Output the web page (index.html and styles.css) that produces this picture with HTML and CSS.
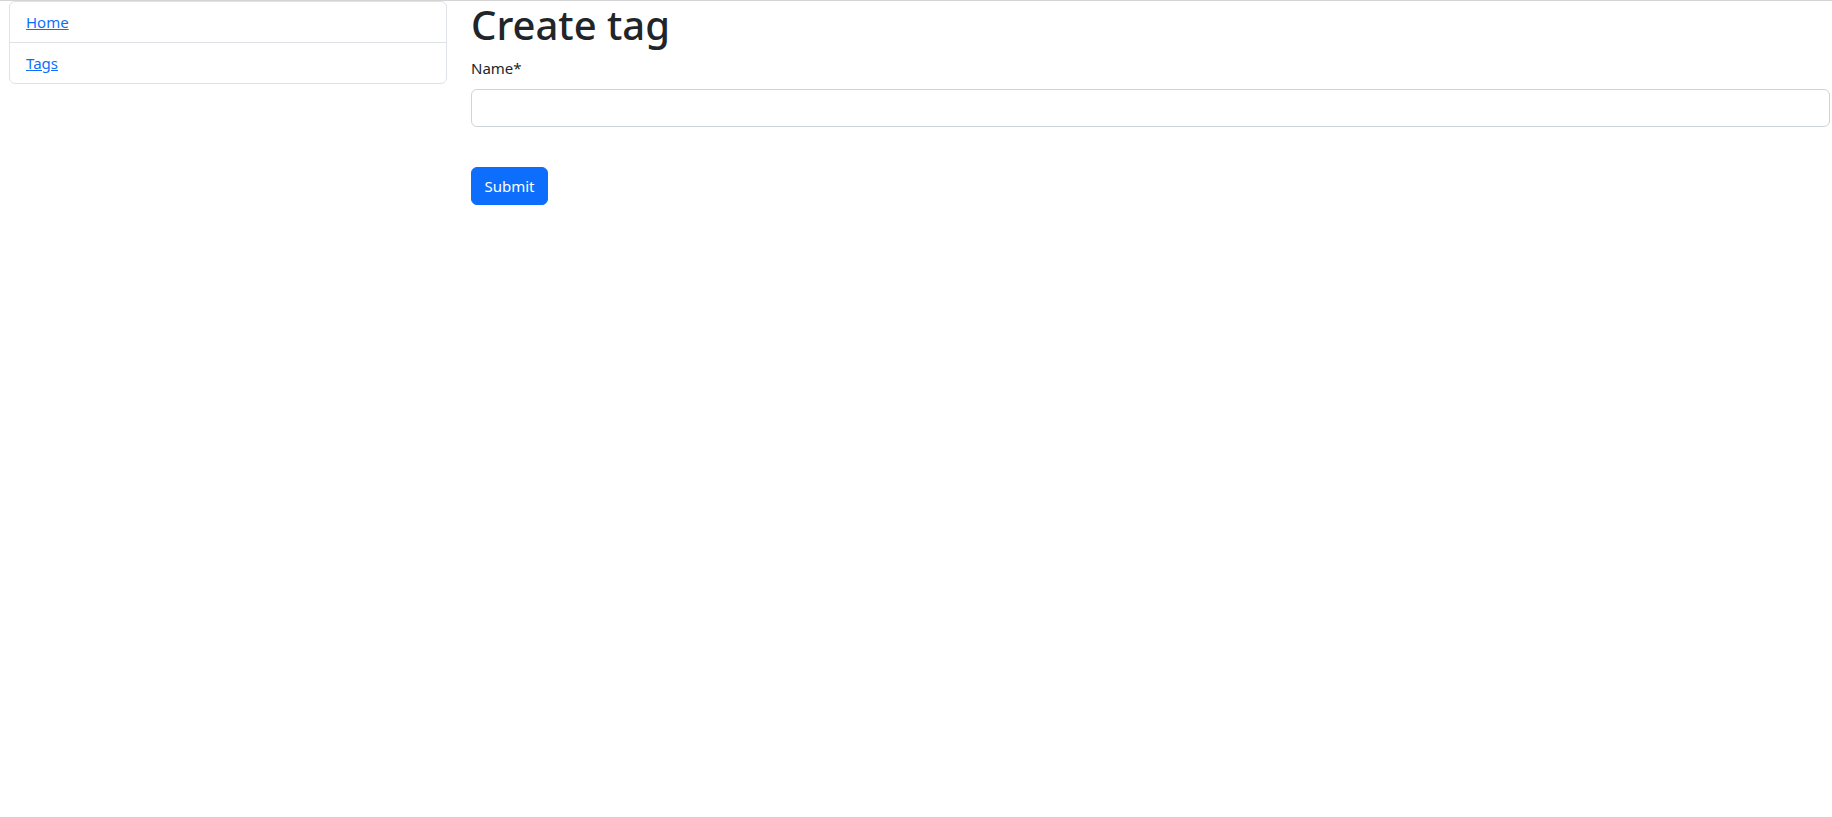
FILE: index.html
```html
<!DOCTYPE html>
<html lang="en">
<head>
<meta charset="utf-8">
<title>Create tag</title>
<link rel="stylesheet" href="styles.css">
</head>
<body>
<div class="topline"></div>
<div class="layout">
  <nav class="sidebar">
    <ul class="list-group">
      <li class="list-item"><a href="#">Home</a></li>
      <li class="list-item"><a href="#">Tags</a></li>
    </ul>
  </nav>
  <main class="main">
    <h1 class="title">Create tag</h1>
    <form class="form">
      <div class="field">
        <label class="label" for="name">Name*</label>
        <input class="input" id="name" type="text">
      </div>
      <button class="btn" type="button">Submit</button>
    </form>
  </main>
</div>
</body>
</html>
```
FILE: styles.css
```css
* { box-sizing: border-box; }
html, body { margin: 0; padding: 0; background: #fff; }
body {
  font-family: "Noto Sans", "Open Sans", sans-serif;
  font-size: 16px;
  line-height: 24px;
  color: #212529;
}
.topline { height: 1px; background: #d4d4d4; }
.layout {
  display: flex;
  gap: 24px;
  padding: 0 2px 0 9px;
}
.sidebar { width: 438px; flex: none; }
.list-group {
  list-style: none;
  margin: 0;
  padding: 0;
  border: 1px solid #dee2e6;
  border-radius: 6px;
}
.list-item {
  padding: 8px 16px;
  border-top: 1px solid #dee2e6;
}
.list-item:first-child { border-top: none; }
.list-item a { color: #0d6efd; text-decoration: underline; font-size: 15px; }
.main { flex: 1; min-width: 0; }
.title {
  margin: 0 0 8px;
  font-size: 40px;
  line-height: 48px;
  font-weight: 500;
  color: #212529;
}
.field { margin-bottom: 40px; }
.label { display: block; margin-bottom: 8px; font-size: 15px; line-height: 22px; padding-bottom: 2px; }
.input {
  display: block;
  width: 100%;
  height: 38px;
  border: 1px solid #ced4da;
  border-radius: 6px;
  padding: 6px 12px;
  font: inherit;
}
.btn {
  display: block;
  height: 38px;
  width: 77px;
  padding: 6px 12px;
  background: #0d6efd;
  color: #fff;
  border: 1px solid #0d6efd;
  border-radius: 6px;
  font: inherit;
  font-size: 15px;
}
```
